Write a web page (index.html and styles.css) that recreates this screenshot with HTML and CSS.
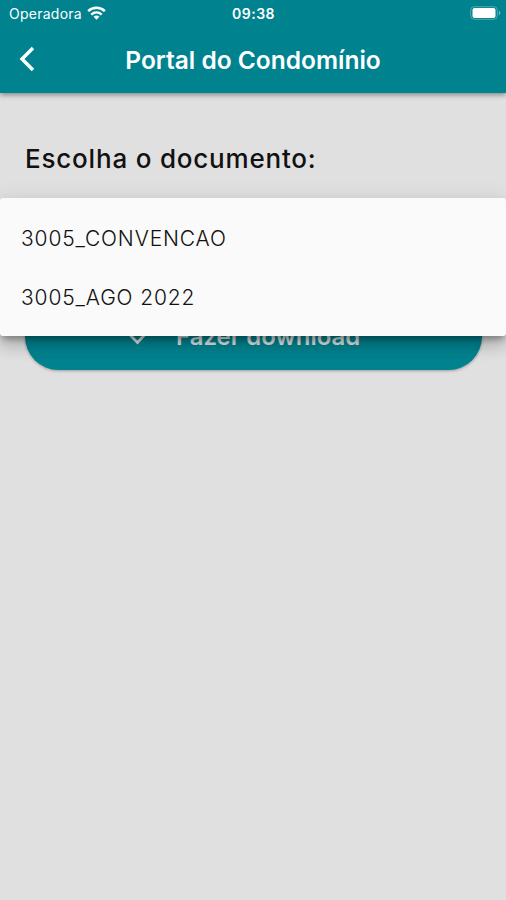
FILE: index.html
```html
<!DOCTYPE html>
<html lang="pt">
<head>
<meta charset="utf-8">
<title>Portal do Condomínio</title>
<link rel="stylesheet" href="styles.css">
</head>
<body>
<header class="app-bar">
  <div class="status">
    <div class="carrier"><span class="carrier-name">Operadora</span>
      <svg class="wifi" width="19" height="14" viewBox="0 0 20 14" fill="none" stroke="#fff" stroke-width="2.7"><path d="M1.2 5.1C6.2.3 13.8.3 18.8 5.1M4.5 8.7c3.2-2.9 7.8-2.9 11 0"/><path d="M10 14 6.9 10.9c1.8-1.6 4.4-1.6 6.2 0z" fill="#fff" stroke="none"/></svg>
    </div>
    <time class="clock">09:38</time>
    <svg class="battery" width="31" height="14" viewBox="0 0 31 14"><rect x=".7" y=".7" width="26.6" height="12.6" rx="3.5" fill="none" stroke="#fff" stroke-opacity=".3"/><rect x="2.5" y="2" width="23" height="10" rx="2" fill="#fff"/><path d="M28.8 4.6c2 .7 2 4.1 0 4.8z" fill="#fff" fill-opacity=".4"/></svg>
  </div>
  <div class="toolbar">
    <svg class="back" width="16" height="26" viewBox="0 0 16 26" fill="none" stroke="#fff" stroke-width="3.4"><path d="M14 2 3 13l11 11"/></svg>
    <h1 class="title">Portal do Condomínio</h1>
  </div>
</header>
<main class="content">
  <h2 class="prompt">Escolha o documento:</h2>
  <button class="download">
    <svg class="check" width="22" height="18" viewBox="0 0 22 18" fill="none" stroke="#dfe5e5" stroke-width="2.7"><path d="m1.5 7.5 7 7L21 1"/></svg>
    <span class="download-label">Fazer download</span>
  </button>
  <ul class="menu">
    <li class="option">3005_CONVENCAO</li>
    <li class="option">3005_AGO 2022</li>
  </ul>
</main>
</body>
</html>
```
FILE: styles.css
```css
* { box-sizing: border-box; }
body {
  margin: 0;
  height: 900px;
  overflow: hidden;
  background: #e0e0e0;
  font-family: Inter, "Liberation Sans", sans-serif;
  white-space: nowrap;
}
.app-bar {
  position: relative;
  height: 93px;
  background: #00838f;
  color: #fff;
  box-shadow: 0 2px 5px rgba(0, 0, 0, .4);
}
.status {
  display: grid;
  grid-template-columns: 1fr auto 1fr;
  align-items: center;
  height: 26px;
  padding: 0 5px 0 9px;
}
.carrier { display: flex; align-items: center; gap: 5px; }
.carrier-name { font-size: 14px; letter-spacing: .25px; }
.wifi { margin-top: -1px; }
.clock { font-size: 14px; font-weight: 600; letter-spacing: .5px; margin-left: -3px; }
.battery { justify-self: end; }
.toolbar {
  display: grid;
  grid-template-columns: 1fr auto 1fr;
  align-items: center;
  height: 66px;
  padding-left: 19px;
  padding-right: 19px;
}
.title {
  margin: 1px 0 0;
  font-size: 24.5px;
  font-weight: 600;
  line-height: 30px;
}
.content { position: relative; padding: 51px 24px 0 25px; }
.prompt {
  margin: 0;
  font-size: 26px;
  font-weight: 500;
  line-height: 30px;
  letter-spacing: .8px;
  color: #111;
}
.download {
  display: flex;
  align-items: center;
  gap: 25px;
  width: 457px;
  height: 67px;
  margin-top: 129px;
  padding: 0 0 0 104px;
  border: 0;
  border-radius: 36px;
  background: #00838f;
  color: #dfe5e5;
  font: 600 24px/30px Inter, "Liberation Sans", sans-serif;
  box-shadow: 0 1px 3px rgba(0, 0, 0, .3);
}
.menu {
  position: absolute;
  top: 105px;
  left: 0;
  width: 506px;
  height: 138px;
  margin: 0;
  padding: 11px 21px;
  border-radius: 3px;
  background: #fafafa;
  list-style: none;
  box-shadow: 0 5px 6px -2px rgba(0, 0, 0, .3), 0 10px 16px rgba(0, 0, 0, .16), 0 4px 24px rgba(0, 0, 0, .12);
}
.option {
  display: flex;
  align-items: center;
  height: 59px;
  font-size: 21px;
  font-weight: 300;
  letter-spacing: .85px;
  color: #111;
}
```
